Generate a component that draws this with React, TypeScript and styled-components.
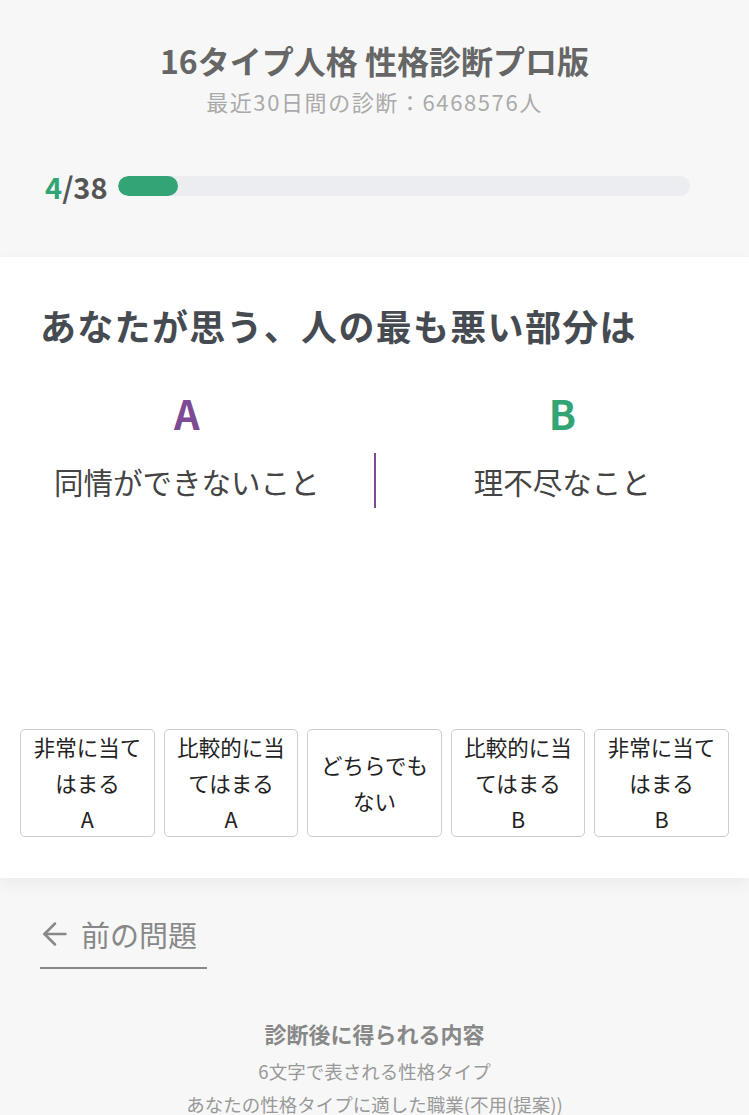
import React from 'react';
import styled, { createGlobalStyle } from 'styled-components';
import { ArrowLeft } from 'lucide-react';

const GlobalStyle = createGlobalStyle`
    html, body {
        margin: 0;
        padding: 0;
        background: #f7f7f7;
    }
    body {
        font-family: "Noto Sans CJK JP", "Noto Sans", "Liberation Sans", sans-serif;
    }
`;

const choices = [
    ['非常に当て', 'はまる', 'A'],
    ['比較的に当', 'てはまる', 'A'],
    ['どちらでも', 'ない'],
    ['比較的に当', 'てはまる', 'B'],
    ['非常に当て', 'はまる', 'B'],
];

const App: React.FC = () => {
    const current = 4;
    const total = 38;

    return (
        <Page>
            <GlobalStyle />
            <Header>
                <Title>16タイプ人格 性格診断プロ版</Title>
                <Subtitle>最近30日間の診断：6468576人</Subtitle>
                <ProgressRow>
                    <Count>
                        <Current>{current}</Current>/{total}
                    </Count>
                    <Track>
                        <Fill style={{ width: `${(current / total) * 100}%` }} />
                    </Track>
                </ProgressRow>
            </Header>

            <Card>
                <Question>あなたが思う、人の最も悪い部分は</Question>
                <Versus>
                    <Label color="#7d4b94">A</Label>
                    <Label color="#33a474">B</Label>
                    <Statement>同情ができないこと</Statement>
                    <Divider />
                    <Statement>理不尽なこと</Statement>
                </Versus>
                <Choices>
                    {choices.map((lines, i) => (
                        <Choice key={i}>
                            {lines.map((line, j) => (
                                <span key={j}>{line}</span>
                            ))}
                        </Choice>
                    ))}
                </Choices>
            </Card>

            <Footer>
                <BackLink>
                    <ArrowLeft size={36} strokeWidth={1.7} />
                    <span>前の問題</span>
                </BackLink>
                <Info>
                    <InfoTitle>診断後に得られる内容</InfoTitle>
                    <InfoLine>6文字で表される性格タイプ</InfoLine>
                    <InfoLine>あなたの性格タイプに適した職業(不用(提案))</InfoLine>
                </Info>
            </Footer>
        </Page>
    );
};

export default App;

const Page = styled.div`
    width: 749px;
    min-height: 1115px;
    background: #f7f7f7;
    overflow: hidden;
`;

const Header = styled.header`
    padding: 40px 59px 56px 45px;
    text-align: center;
`;

const Title = styled.h1`
    margin: 0;
    font-size: 32px;
    line-height: 40px;
    font-weight: 700;
    color: #666;
    padding-left: 14px;
`;

const Subtitle = styled.div`
    margin-top: 6px;
    font-size: 22px;
    line-height: 30px;
    color: #aaa;
    letter-spacing: 1.6px;
    padding-left: 14px;
`;

const ProgressRow = styled.div`
    display: flex;
    align-items: center;
    gap: 10px;
    margin-top: 55px;
    height: 30px;
`;

const Count = styled.div`
    font-size: 29px;
    font-weight: 700;
    color: #555;
    line-height: 30px;
`;

const Current = styled.span`
    color: #33a474;
`;

const Track = styled.div`
    flex: 1;
    height: 20px;
    border-radius: 10px;
    background: #ebedf0;
    overflow: hidden;
`;

const Fill = styled.div`
    height: 100%;
    min-width: 60px;
    border-radius: 10px;
    background: #33a474;
`;

const Card = styled.main`
    background: #fff;
    padding: 44px 0 41px;
    box-shadow: 0 6px 16px rgba(0, 0, 0, 0.05);
    position: relative;
`;

const Question = styled.h2`
    margin: 0;
    padding: 0 40px;
    font-size: 36px;
    line-height: 48px;
    font-weight: 700;
    color: #464b52;
    letter-spacing: 1.3px;
`;

const Versus = styled.div`
    display: grid;
    grid-template-columns: 1fr 2px 1fr;
    grid-template-rows: auto auto;
    align-items: center;
    margin-top: 40px;
`;

const Label = styled.div<{ color: string }>`
    font-size: 40px;
    line-height: 48px;
    font-weight: 700;
    text-align: center;
    color: ${p => p.color};
    &:nth-child(2) {
        grid-column: 3;
    }
`;

const Statement = styled.div`
    text-align: center;
    font-size: 29.5px;
    line-height: 40px;
    color: #444;
    margin-top: 16px;
`;

const Divider = styled.div`
    width: 2px;
    height: 55px;
    margin-top: 16px;
    background: #7d4b94;
`;

const Choices = styled.div`
    display: flex;
    gap: 8.75px;
    padding: 0 20px;
    margin-top: 221px;
`;

const Choice = styled.button`
    flex: 1;
    height: 108px;
    display: flex;
    flex-direction: column;
    align-items: center;
    justify-content: center;
    padding: 0;
    background: #fff;
    border: 1px solid #ccc;
    border-radius: 5px;
    font-family: inherit;
    font-size: 21.5px;
    line-height: 36px;
    color: #222;
`;

const Footer = styled.footer`
    padding: 36px 0 40px;
`;

const BackLink = styled.a`
    margin-left: 40px;
    display: inline-flex;
    align-items: center;
    gap: 8px;
    width: 167px;
    box-sizing: border-box;
    padding-bottom: 13px;
    border-bottom: 2px solid #888;
    color: #888;
    font-size: 29px;
    line-height: 40px;
    cursor: pointer;
    svg {
        margin-left: -3px;
    }
`;

const Info = styled.section`
    margin-top: 48px;
    text-align: center;
`;

const InfoTitle = styled.h3`
    margin: 0 0 6px;
    font-size: 22px;
    line-height: 32px;
    font-weight: 700;
    color: #888;
`;

const InfoLine = styled.div`
    font-size: 18.5px;
    line-height: 33px;
    color: #999;
`;
